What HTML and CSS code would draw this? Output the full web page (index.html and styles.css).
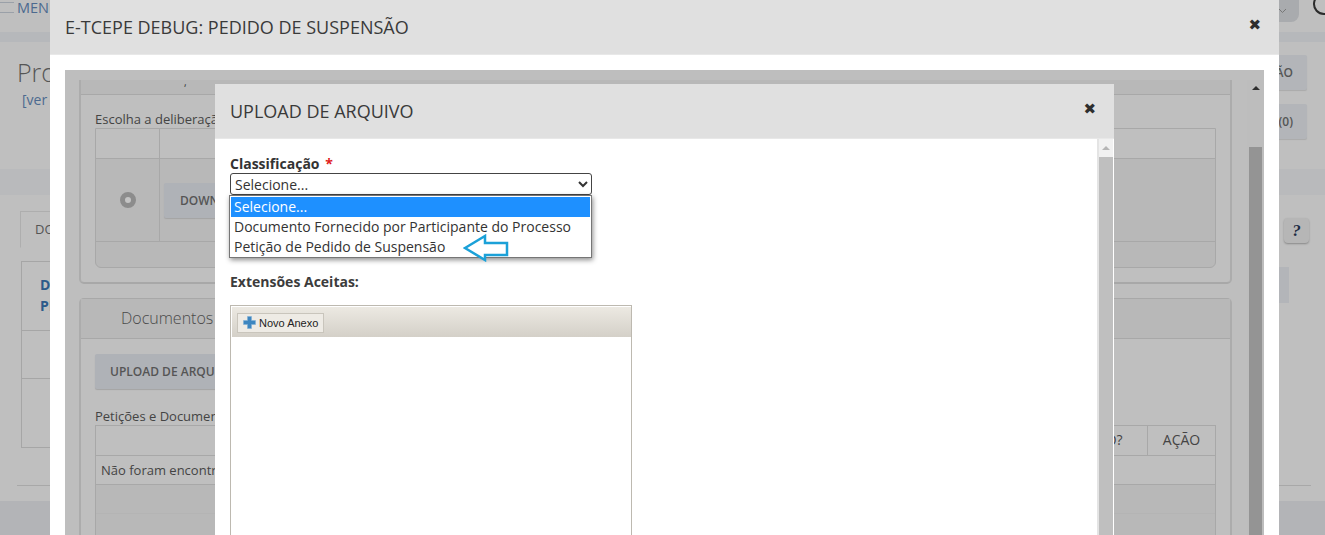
FILE: index.html
```html
<!DOCTYPE html>
<html lang="pt">
<head>
<meta charset="utf-8">
<title>Upload de arquivo</title>
<link rel="stylesheet" href="styles.css">
</head>
<body>
<div class="page">
  <header class="topbar">
    <div class="menu"><span class="burger"></span><span>MENU</span></div>
    <div class="top-right">
      <span class="user-btn"><svg width="9" height="6" viewBox="0 0 9 6"><path d="M1 1l3.500 3.500L8 1" fill="none" stroke="#777" stroke-width="1"/></svg></span>
      <svg class="power" width="24" height="24" viewBox="0 0 24 24"><path d="M6 4a10 10 0 1 0 12 0" fill="none" stroke="#2b2b2b" stroke-width="2"/><path d="M12 -2v10" stroke="#2b2b2b" stroke-width="2"/></svg>
    </div>
  </header>
  <div class="topline"></div>
  <section class="title-row">
    <div>
      <h1 class="page-title">Processo</h1>
      <a class="ver">[ver mais]</a>
    </div>
    <div class="page-actions">
      <span class="page-btn">SUSPENSÃO</span>
      <span class="page-btn">ANEXOS (0)</span>
    </div>
  </section>
  <div class="band"></div>
  <section class="page-body">
    <div class="tab-row"><span class="page-tab">DOCUMENTOS</span><span class="help">?</span></div>
    <div class="page-table">
      <div class="pt-head">DADOS<br>PROCESSO</div>
      <div class="pt-row"></div>
      <div class="pt-row tall"></div>
    </div>
    <span class="side-btn"></span>
    <div class="page-rule"></div>
  </section>
  <footer class="page-foot"></footer>
</div>

<div class="window outer">
  <div class="win-head"><h2>E-TCEPE DEBUG: PEDIDO DE SUSPENSÃO</h2><span class="close">✖</span></div>
  <div class="frame">
    <div class="frame-content">
      <div class="panel first">
        <div class="panel-top">,</div>
        <div class="panel-body">
          <p class="cap">Escolha a deliberação</p>
          <div class="grid-table">
            <div class="g-head"><span class="g-c1"></span><span class="g-c2"></span></div>
            <div class="g-row">
              <span class="g-c1"><i class="radio"></i></span>
              <span class="g-c2"><b class="gray-btn">DOWNLOAD</b></span>
            </div>
            <div class="g-foot"></div>
          </div>
        </div>
      </div>
      <div class="panel second">
        <div class="panel-tab">Documentos</div>
        <div class="panel-body">
          <b class="gray-btn upload">UPLOAD DE ARQUIVO</b>
          <p class="cap cap2">Petições e Documentos</p>
          <div class="doc-table">
            <div class="d-head"><span class="d-q">ANEXADO?</span><span class="d-a">AÇÃO</span></div>
            <div class="d-row">Não foram encontrados registros</div>
            <div class="d-dark"></div>
            <div class="d-dark"></div>
          </div>
        </div>
      </div>
    </div>
    <div class="scroll dark"><span class="arrow-up"></span><span class="thumb"></span></div>
  </div>
</div>

<div class="window inner">
  <div class="win-head"><h2>UPLOAD DE ARQUIVO</h2><span class="close">✖</span></div>
  <div class="inner-body">
    <div class="form">
      <label class="field-label" for="cl">Classificação <em>*</em></label>
      <select class="select" id="cl"><option>Selecione...</option></select>
      <p class="ext">Extensões Aceitas:</p>
      <div class="uploader">
        <div class="toolbar">
          <span class="add-btn">
            <svg width="13" height="13" viewBox="0 0 13 13"><path d="M4.500 .5h4v4h4v4h-4v4h-4v-4h-4v-4h4z" fill="#3d86c0" stroke="#7fb0d6" stroke-width=".6"/></svg>
            Novo Anexo
          </span>
        </div>
      </div>
    </div>
    <div class="scroll light"><span class="arrow-up"></span><span class="thumb"></span></div>
  </div>
</div>

<ul class="options">
  <li class="on">Selecione...</li>
  <li>Documento Fornecido por Participante do Processo</li>
  <li>Petição de Pedido de Suspensão</li>
</ul>
<svg class="pointer" width="46" height="28" viewBox="0 0 46 28"><path d="M2 14L22 2v7h22v12H22v5z" fill="#fff" stroke="#1ba1d8" stroke-width="2.500"/></svg>
</body>
</html>
```

FILE: styles.css
```css
* { box-sizing: border-box; }
html, body { margin: 0; height: 535px; overflow: hidden; }
body { position: relative; font-family: "Open Sans", sans-serif; color: #333; background: #bfbfbf; }
h1, h2, p, ul { margin: 0; padding: 0; }

/* dimmed page behind the windows */
.page { height: 535px; display: flex; flex-direction: column; background: #bfbfbf; }
.topbar { height: 32px; flex: none; display: flex; justify-content: space-between; }
.menu { display: flex; gap: 3px; font-size: 14.500px; line-height: 15px; color: #4c6a8f; }
.burger { width: 14px; height: 11px; margin-top: 2px; border-top: 1px solid #9aa0a8; border-bottom: 1px solid #9aa0a8; position: relative; }
.top-right { display: flex; gap: 13px; margin-right: -11px; }
.user-btn { width: 60px; height: 22px; background: #a9abae; border-radius: 0 0 8px 8px; display: flex; justify-content: flex-end; align-items: center; padding-right: 12px; }
.power { margin-top: -8px; }
.topline { height: 10px; flex: none; background: #b6b8bb; }
.title-row { height: 127px; flex: none; display: flex; justify-content: space-between; padding: 13px 18px 0 17px; }
.page-title { font-weight: 300; font-size: 25px; line-height: 34px; color: #555; }
.ver { display: block; margin: 1px 0 0 5px; font-size: 14px; line-height: 19px; color: #4c6a8f; }
.page-actions { display: flex; flex-direction: column; align-items: flex-end; gap: 14px; }
.page-btn { width: 110px; height: 35px; background: #b3b5b9; border-radius: 2px; box-shadow: 0 1px 1px #aaa; font-size: 12px; font-weight: 600; line-height: 35px; text-align: right; padding-right: 14px; color: #555; white-space: nowrap; }
.band { height: 26px; flex: none; background: #b9babc; }
.page-body { flex: 1; padding: 16px 14px 0 17px; position: relative; }
.tab-row { height: 36px; display: flex; justify-content: space-between; align-items: flex-start; }
.page-tab { margin-left: 3px; width: 100px; height: 37px; border: 1px solid #aeaeae; border-bottom-color: #bfbfbf; font-size: 13px; line-height: 35px; padding-left: 14px; color: #555; }
.help { width: 25px; height: 25px; margin: 7px 2px 0 0; border-radius: 4px; background: #b6b6b6; box-shadow: 0 1px 2px #888; font: italic 700 17px/25px "Liberation Serif", serif; text-align: center; color: #1d2c44; }
.page-table { width: 60px; margin: 14px 0 0 4px; border: 1px solid #a6a6a6; border-right: 0; height: 187px; }
.pt-head { height: 69px; padding: 12px 0 0 18px; font-size: 14px; line-height: 21px; font-weight: 700; color: #2d5a8a; border-bottom: 1px solid #a6a6a6; white-space: nowrap; }
.pt-row { height: 48px; border-bottom: 1px solid #a6a6a6; }
.pt-row.tall { height: 68px; border: 0; }
.side-btn { position: absolute; top: 72px; right: 36px; width: 20px; height: 36px; background: #b3b5b9; }
.page-rule { position: absolute; top: 290px; left: 17px; right: 14px; border-top: 1px solid #a8a8a8; }
.page-foot { height: 34px; flex: none; background: #b3b4b7; }

/* windows */
.window { position: absolute; display: flex; flex-direction: column; background: #fff; }
.outer { left: 50px; top: 0; width: 1229px; height: 535px; }
.inner { left: 215px; top: 84px; width: 899px; height: 451px; border-radius: 3px 3px 0 0; }
.win-head { height: 55px; flex: none; display: flex; justify-content: space-between; align-items: center; padding: 0 18px 0 15px; background: #e0e0e0; border-bottom: 1px solid #e8e8e8; }
.win-head h2 { font-weight: 400; font-size: 18px; line-height: 24px; color: #3a3a3a; }
.close { font: 700 15px/15px "DejaVu Sans", sans-serif; color: #2e2e2e; margin-top: -4px; }
.frame { position: absolute; left: 15px; top: 70px; width: 1199px; height: 465px; display: flex; background: #bebebe; overflow: hidden; }
.frame-content { flex: 1; padding: 10px 15px 0 14px; min-width: 0; }
.panel { width: 1153px; background: #bfbfbf; border-left: 2px solid #acacac; border-right: 2px solid #acacac; }
.panel.first { height: 204px; border-bottom: 2px solid #a8a8a8; border-radius: 0 0 5px 5px; }
.panel-top { height: 15px; background: #b8b8b8; border-bottom: 1px solid #a8a8a8; font-size: 10px; line-height: 5px; padding-left: 103px; }
.panel-body { padding: 0 14px; }
.cap { font-size: 13px; line-height: 17px; padding-top: 16px; height: 33px; color: #444; }
.grid-table { border: 1px solid #a8a8a8; height: 140px; background: #b8b8b8; border-radius: 0 0 6px 6px; }
.g-head { height: 30px; display: flex; background: #bfbfbf; border-bottom: 1px solid #a8a8a8; }
.g-row { height: 83px; display: flex; border-bottom: 1px solid #a8a8a8; }
.g-c1 { width: 64px; flex: none; border-right: 1px solid #a8a8a8; display: flex; align-items: center; justify-content: center; }
.g-c2 { flex: 1; display: flex; align-items: center; padding-left: 4px; }
.radio { width: 16px; height: 16px; border-radius: 50%; border: 5px solid #8c8c8c; background: #c4c4c4; }
.gray-btn { display: block; height: 35px; width: 160px; background: #afb2b7; border-radius: 2px; box-shadow: 0 1px 1px #a4a4a4; font-weight: 600; font-size: 12px; line-height: 35px; padding-left: 16px; color: #555; white-space: nowrap; overflow: hidden; }
.panel.second { margin-top: 14px; height: 300px; border-top: 1px solid #a8a8a8; border-radius: 5px 5px 0 0; }
.panel-tab { height: 40px; background: #b8b8b8; border-bottom: 1px solid #a8a8a8; padding-left: 40px; font-size: 16px; font-weight: 300; line-height: 39px; color: #4a4a4a; }
.panel.second .panel-body { padding-top: 15px; }
.upload { width: 200px; padding-left: 15px; }
.cap2 { padding-top: 19px; height: 36px; }
.doc-table { border: 1px solid #a8a8a8; border-bottom: 0; }
.d-head { height: 30px; display: flex; justify-content: flex-end; border-bottom: 1px solid #a8a8a8; font-size: 14px; line-height: 27px; text-align: center; color: #444; }
.d-q { width: 110px; padding-right: 10px; }
.d-a { width: 68px; border-left: 1px solid #a8a8a8; }
.d-row { height: 29px; padding-left: 5px; border-bottom: 1px solid #a8a8a8; font-size: 13px; line-height: 28px; color: #444; white-space: nowrap; overflow: hidden; }
.d-dark { height: 29px; background: #b8b8b8; border-bottom: 1px solid #b4b4b4; }
.scroll { flex: none; display: flex; flex-direction: column; align-items: center; }
.scroll.dark { width: 17px; background: #bdbdbd; padding-top: 6px; margin-top: 10px; }
.scroll.dark .arrow-up { border-bottom: 4px solid #2f2f2f; }
.scroll.dark .thumb { flex: 1; width: 13px; margin-top: 57px; background: #949494; }
.arrow-up { display: block; width: 0; height: 0; border-left: 4px solid transparent; border-right: 4px solid transparent; }
.inner-body { flex: 1; min-height: 0; display: flex; justify-content: space-between; padding-right: 1px; }
.form { padding: 15px 0 0 15px; flex: 1; }
.field-label { display: block; font-size: 14px; font-weight: 700; line-height: 19px; color: #333; }
.field-label em { font-style: normal; color: #e02020; margin-left: 2px; }
.select { display: block; width: 362px; height: 22px; margin: 0; padding: 0; font: 14px "Open Sans", sans-serif; color: #333; background: #fff; border: 1px solid #444; border-radius: 3px; }
.ext { margin-top: 77px; font-size: 14px; font-weight: 700; line-height: 19px; color: #3c3c3c; }
.uploader { width: 402px; height: 300px; margin-top: 14px; padding: 1px 0 1px 1px; border: 1px solid #bdb9b0; }
.toolbar { height: 30px; padding: 5px 0 0 5px; background: linear-gradient(#ece9e2, #d4d0c8); }
.add-btn { display: inline-flex; align-items: center; gap: 3px; width: 87px; height: 20px; padding-left: 5px; background: #eeebe5; border: 1px solid #c9c5bc; font: 11px "Liberation Sans", sans-serif; color: #222; white-space: nowrap; }
.scroll.light { width: 16px; background: #bfbfbf; border-left: 2px solid #e4e4e4; box-shadow: inset 0 18px 0 #f1f1f1; }
.scroll.light .arrow-up { border-bottom: 4px solid #b5b5b5; margin-top: 7px; }
.scroll.light .thumb { flex: 1; margin-top: 7px; width: 100%; background: #bfbfbf; }

/* open dropdown list and annotation */
.options { position: absolute; left: 229px; top: 195px; width: 363px; height: 63px; list-style: none; padding: 1px; background: #fff; border: 1px solid #767676; box-shadow: 1px 2px 5px rgba(0,0,0,.45); font-size: 14px; line-height: 20px; color: #333; }
.options li { height: 20px; padding-left: 3px; white-space: nowrap; }
.options .on { background: #1e90ff; color: #fff; }
.pointer { position: absolute; left: 463px; top: 234px; }
```
